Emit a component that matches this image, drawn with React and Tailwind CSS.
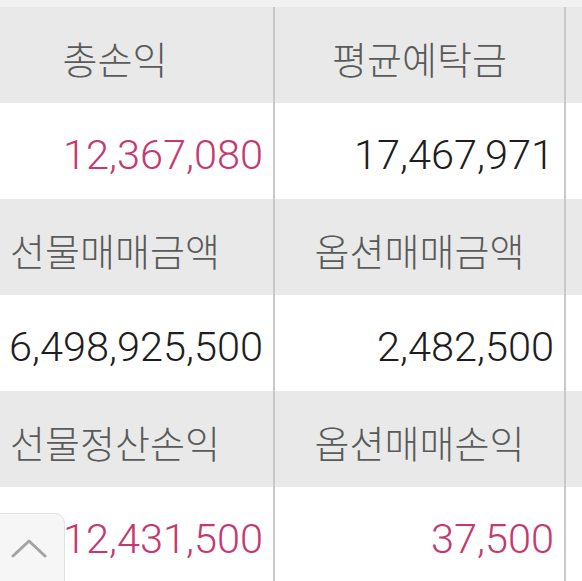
const rows = [
  { labels: ['총손익', '평균예탁금'], values: [{ v: '12,367,080', red: true }, { v: '17,467,971' }] },
  { labels: ['선물매매금액', '옵션매매금액'], values: [{ v: '6,498,925,500' }, { v: '2,482,500' }] },
  { labels: ['선물정산손익', '옵션매매손익'], values: [{ v: '12,431,500', red: true }, { v: '37,500', red: true }] }
]

const cellLine = 'border-r-2 border-[#c9c9c9]'

const App = () => {
  return (
    <div className="relative w-[582px] h-[581px] overflow-hidden bg-white" style={{ fontFamily: 'Roboto, "Noto Sans CJK KR", sans-serif' }}>
      <div className="h-[7px] bg-[#f1f1f1]" />
      <div className="-ml-[43px] w-[700px] grid grid-cols-[318px_291px_1fr]">
        {rows.map((row, i) => (
          <div key={i} className="contents">
            {row.labels.map(label => (
              <div key={label} className={`h-[96px] pt-[12px] bg-[#e9e9e9] flex items-center justify-center text-[38px] font-light text-[#5a5a5a] ${cellLine}`}>
                {label}
              </div>
            ))}
            <div className={`h-[96px] bg-[#e9e9e9] ${cellLine}`} />
            {row.values.map(cell => (
              <div key={cell.v} className={`h-[96px] pt-[8px] bg-white flex items-center justify-end pr-[10px] text-[41.5px] font-light ${cell.red ? 'text-[#c4396f]' : 'text-[#1e1e1e]'} ${cellLine}`}>
                {cell.v}
              </div>
            ))}
            <div className={`h-[96px] bg-white ${cellLine}`} />
          </div>
        ))}
      </div>
      <button type="button" className="absolute -left-[8px] top-[513px] w-[73px] h-[80px] bg-[#f6f6f6] border border-[#e2e2e2] rounded-tr-[10px] flex justify-center pt-[25px]">
        <svg width="36" height="20" viewBox="0 0 36 20" fill="none" stroke="#a3a3a3" strokeWidth="3" strokeLinecap="round" strokeLinejoin="round">
          <polyline points="2,17 18,2 34,17" />
        </svg>
      </button>
    </div>
  )
}

export default App
